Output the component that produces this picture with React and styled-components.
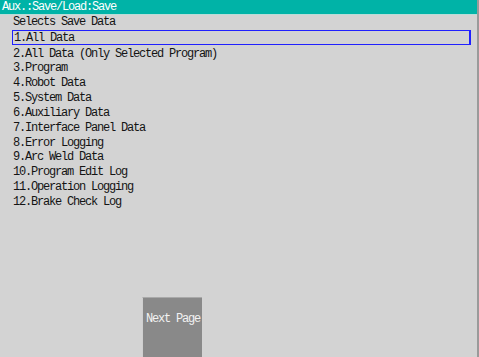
import styled, { createGlobalStyle } from "styled-components";

const Global = createGlobalStyle`
  html, body {
    margin: 0;
    padding: 0;
    background: #d3d3d3;
  }
`;

const Screen = styled.div`
  width: 477px;
  height: 357px;
  background-color: #d3d3d3;
  border-right: 2px solid #9a9a9a;
  display: flex;
  flex-direction: column;
  font-family: "Liberation Mono", "DejaVu Sans Mono", monospace;
  font-size: 12px;
  letter-spacing: -1.2px;
  color: #141414;
  overflow: hidden;
`;

const TitleBar = styled.div`
  height: 14px;
  line-height: 14px;
  background-color: #00b3a7;
  color: #ffffff;
  padding-left: 2px;
  border-bottom: 1px solid #b8ddd8;
  white-space: nowrap;
`;

const Heading = styled.div`
  height: 14px;
  line-height: 14px;
  padding-left: 13px;
`;

const List = styled.div`
  display: flex;
  flex-direction: column;
  margin-top: 0.5px;
`;

const Row = styled.div`
  height: ${(p) => (p.$selected ? "15.5px" : "14.85px")};
  line-height: 14.85px;
  margin-left: ${(p) => (p.$selected ? "12px" : "13px")};
  margin-right: 6px;
  margin-bottom: ${(p) => (p.$selected ? "1.5px" : "0")};
  padding-left: ${(p) => (p.$selected ? "1px" : "0")};
  box-sizing: border-box;
  border: ${(p) => (p.$selected ? "1px solid #2020ff" : "none")};
  border-right-width: ${(p) => (p.$selected ? "2px" : "0")};
  white-space: nowrap;
`;

const Footer = styled.div`
  flex: 1;
  display: flex;
  align-items: flex-end;
  padding-left: 142px;
`;

const PageButton = styled.button`
  width: 60px;
  height: 60px;
  margin: 0;
  padding: 14px 0 0 1px;
  background-color: #898989;
  border: none;
  border-left: 1px solid #cfcfcf;
  border-top: 1px solid #a9a9a9;
  color: #f2f2f2;
  font-family: "Liberation Mono", "DejaVu Sans Mono", monospace;
  font-size: 12px;
  letter-spacing: -1.2px;
  display: flex;
  align-items: flex-start;
  justify-content: center;
  white-space: nowrap;
`;

const items = [
  "1.All Data",
  "2.All Data (Only Selected Program)",
  "3.Program",
  "4.Robot Data",
  "5.System Data",
  "6.Auxiliary Data",
  "7.Interface Panel Data",
  "8.Error Logging",
  "9.Arc Weld Data",
  "10.Program Edit Log",
  "11.Operation Logging",
  "12.Brake Check Log",
];

export default function App() {
  return (
    <>
      <Global />
      <Screen>
        <TitleBar>Aux.:Save/Load:Save</TitleBar>
        <Heading>Selects Save Data</Heading>
        <List>
          {items.map((label, i) => (
            <Row key={label} $selected={i === 0}>
              {label}
            </Row>
          ))}
        </List>
        <Footer>
          <PageButton>Next Page</PageButton>
        </Footer>
      </Screen>
    </>
  );
}
